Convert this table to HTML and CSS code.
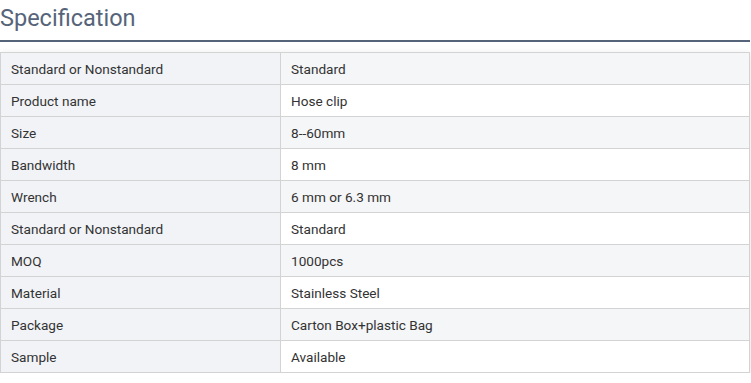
FILE: index.html
```html
<!DOCTYPE html>
<html>
<head>
<meta charset="utf-8">
<link rel="stylesheet" href="styles.css">
</head>
<body>
<div class="wrap">
  <h2 class="title">Specification</h2>
  <table class="spec">
    <tbody>
      <tr><td class="k">Standard or Nonstandard</td><td class="v">Standard</td></tr>
      <tr><td class="k">Product name</td><td class="v">Hose clip</td></tr>
      <tr><td class="k">Size</td><td class="v">8--60mm</td></tr>
      <tr><td class="k">Bandwidth</td><td class="v">8 mm</td></tr>
      <tr><td class="k">Wrench</td><td class="v">6 mm or 6.3 mm</td></tr>
      <tr><td class="k">Standard or Nonstandard</td><td class="v">Standard</td></tr>
      <tr><td class="k">MOQ</td><td class="v">1000pcs</td></tr>
      <tr><td class="k">Material</td><td class="v">Stainless Steel</td></tr>
      <tr><td class="k">Package</td><td class="v">Carton Box+plastic Bag</td></tr>
      <tr><td class="k">Sample</td><td class="v">Available</td></tr>
    </tbody>
  </table>
</div>
</body>
</html>
```

FILE: styles.css
```css
html, body {
  margin: 0;
  padding: 0;
  background: #ffffff;
}
.wrap {
  width: 750px;
  font-family: Roboto, "Liberation Sans", sans-serif;
}
.title {
  margin: 0;
  font-size: 23.5px;
  font-weight: 400;
  line-height: 36px;
  padding-bottom: 4px;
  color: #56647a;
  border-bottom: 2px solid #56647a;
}
.spec {
  margin-top: 10px;
  width: 750px;
  border-collapse: collapse;
  box-shadow: 0 2px 8px rgba(0, 0, 0, 0.12);
}
.spec td {
  border: 1px solid #d3d3d3;
  height: 32px;
  padding: 0 10px;
  font-size: 13.6px;
  color: #333333;
  box-sizing: border-box;
}
.spec td.k {
  width: 280px;
  background: #f2f3f7;
}
.spec tr:nth-child(odd) td.v {
  background: #f5f6f8;
}
.spec tr:nth-child(even) td.v {
  background: #ffffff;
}
```
